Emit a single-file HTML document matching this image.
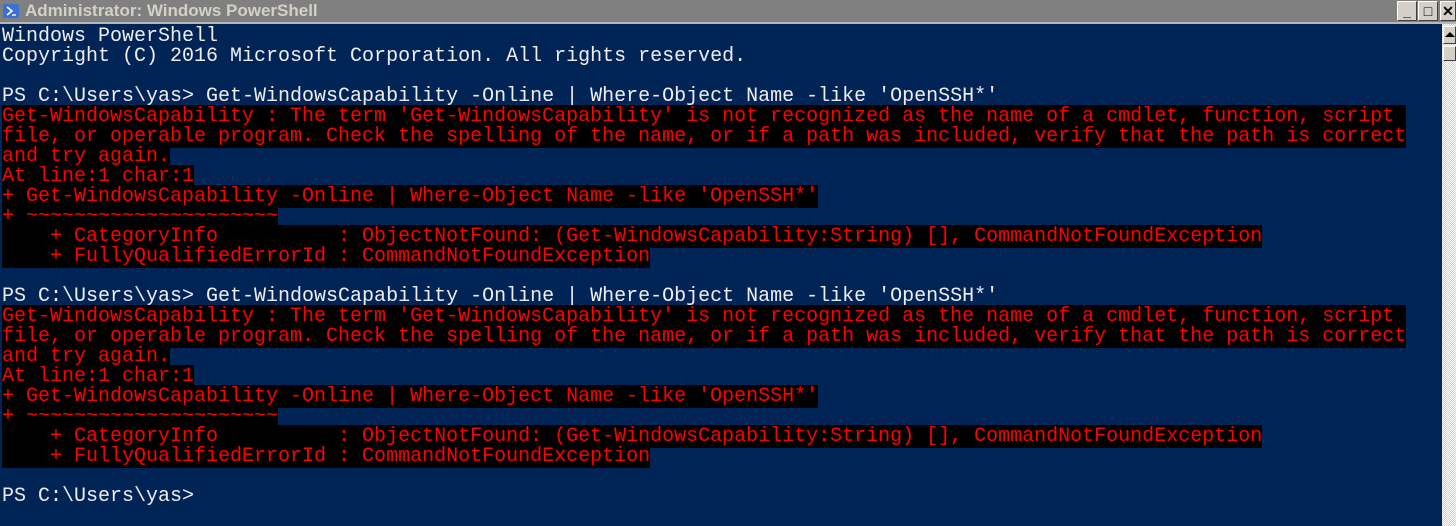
<!DOCTYPE html>
<html><head><style>
html,body{margin:0;padding:0;width:1456px;height:526px;overflow:hidden;background:#012456;}
#title{position:absolute;left:0;top:0;width:1456px;height:22px;background:#808080;border-bottom:2px solid #b8b8b8;}
#title .t{position:absolute;left:25px;top:1px;font:bold 17px "Liberation Sans",sans-serif;color:#d4d0c8;white-space:nowrap;}
#icon{position:absolute;left:3px;top:4px;width:16px;height:14px;background:#3c6fd8;border-radius:2px;}
.btn{position:absolute;top:1px;width:20px;height:20px;background:#d4d0c8;border:1px solid #fff;border-right-color:#404040;border-bottom-color:#404040;box-sizing:border-box;font:bold 14px "Liberation Sans",sans-serif;text-align:center;line-height:18px;color:#000;}
#con{position:absolute;left:2px;top:27px;font-family:"Liberation Mono",monospace;font-size:20px;line-height:20px;color:#eeedf0;white-space:pre;}
.r{color:#ff0000;background:#000;}
#sb{position:absolute;left:1442px;top:24px;width:14px;height:502px;background-color:#fff;background-image:linear-gradient(45deg,#d4d0c8 25%,transparent 25%,transparent 75%,#d4d0c8 75%),linear-gradient(45deg,#d4d0c8 25%,transparent 25%,transparent 75%,#d4d0c8 75%);background-size:2px 2px;background-position:0 0,1px 1px;}
.sbb{position:absolute;left:1443px;width:13px;background:#d4d0c8;border:1px solid #fff;border-right-color:#404040;border-bottom-color:#404040;box-sizing:border-box;}
</style></head><body>
<div id="title"><div id="icon"><svg width="16" height="14"><path d="M4 3l5 4-5 4" stroke="#fff" stroke-width="1.6" fill="none"/><path d="M9 11h4" stroke="#fff" stroke-width="1.4"/></svg></div><div class="t">Administrator: Windows PowerShell</div>
<div class="btn" style="left:1397px">_</div><div class="btn" style="left:1418px">□</div><div class="btn" style="left:1440px;width:16px">✕</div></div>
<div id="sb"></div>
<div class="sbb" style="top:26px;height:18px;"><svg width="11" height="16"><path d="M1 10l5-5 5 5z" fill="#000"/></svg></div>
<div class="sbb" style="top:46px;height:15px;"></div>
<div id="con">Windows PowerShell
Copyright (C) 2016 Microsoft Corporation. All rights reserved.

PS C:\Users\yas&gt; Get-WindowsCapability -Online | Where-Object Name -like 'OpenSSH*'
<span class="r">Get-WindowsCapability : The term 'Get-WindowsCapability' is not recognized as the name of a cmdlet, function, script </span>
<span class="r">file, or operable program. Check the spelling of the name, or if a path was included, verify that the path is correct</span>
<span class="r">and try again.</span>
<span class="r">At line:1 char:1</span>
<span class="r">+ Get-WindowsCapability -Online | Where-Object Name -like 'OpenSSH*'</span>
<span class="r">+ ~~~~~~~~~~~~~~~~~~~~~</span>
<span class="r">    + CategoryInfo          : ObjectNotFound: (Get-WindowsCapability:String) [], CommandNotFoundException</span>
<span class="r">    + FullyQualifiedErrorId : CommandNotFoundException</span>

PS C:\Users\yas&gt; Get-WindowsCapability -Online | Where-Object Name -like 'OpenSSH*'
<span class="r">Get-WindowsCapability : The term 'Get-WindowsCapability' is not recognized as the name of a cmdlet, function, script </span>
<span class="r">file, or operable program. Check the spelling of the name, or if a path was included, verify that the path is correct</span>
<span class="r">and try again.</span>
<span class="r">At line:1 char:1</span>
<span class="r">+ Get-WindowsCapability -Online | Where-Object Name -like 'OpenSSH*'</span>
<span class="r">+ ~~~~~~~~~~~~~~~~~~~~~</span>
<span class="r">    + CategoryInfo          : ObjectNotFound: (Get-WindowsCapability:String) [], CommandNotFoundException</span>
<span class="r">    + FullyQualifiedErrorId : CommandNotFoundException</span>

PS C:\Users\yas&gt;</div>
</body></html>
